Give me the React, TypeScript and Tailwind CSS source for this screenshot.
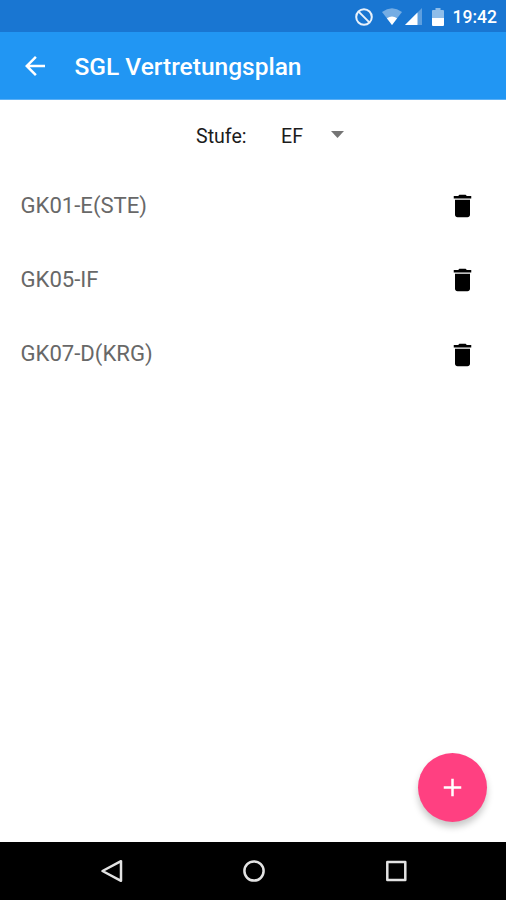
import { FC, useState } from "react";

const StatusBar: FC = () => (
    <div className="flex h-8 shrink-0 items-center justify-end bg-[#1976d2] pt-px pr-[9px] text-white">
        <svg className="mr-[9px] h-[18px] w-[18px]" viewBox="0 0 18 18" fill="none">
            <circle cx="9" cy="9" r="7.8" stroke="#e8f1fb" strokeWidth="2" />
            <path d="M3.6 3.6l10.8 10.8" stroke="#e8f1fb" strokeWidth="2" />
        </svg>
        <svg className="mr-[3px] h-[18px] w-[20px]" viewBox="0 0 20 18">
            <path d="M0 4Q10-3.4 20 4L10 17z" fill="#75ade4" />
            <path d="M4.9 10.3Q10 6.6 15.1 10.3L10 17z" fill="#fff" />
        </svg>
        <svg className="mr-[10px] h-[18px] w-[17px]" viewBox="0 0 17 18">
            <path d="M17 0v17H0z" fill="#5e9fdf" />
            <path d="M12.5 4.5V17H0z" fill="#fff" />
        </svg>
        <svg className="mr-[9px] h-[18px] w-[12px]" viewBox="0 0 12 18">
            <path d="M3.5 0h5v2H11q1 0 1 1v7H0V3q0-1 1-1h2.500z" fill="#8fbde9" />
            <path d="M0 10h12v7q0 1-1 1H1q-1 0-1-1z" fill="#fff" />
        </svg>
        <span className="text-[17.5px] leading-8 font-medium">19:42</span>
    </div>
);

const Toolbar: FC = () => (
    <header className="flex h-[68px] shrink-0 items-center border-b border-[#5cb0f5] bg-[#2196f3] pl-5 text-white">
        <button aria-label="Back">
            <svg className="h-[30px] w-[30px]" viewBox="0 0 24 24" fill="currentColor">
                <path d="M20 11H7.830l5.590-5.590L12 4l-8 8 8 8 1.410-1.410L7.830 13H20v-2z" />
            </svg>
        </button>
        <h1 className="ml-[24.5px] pt-[2px] text-[24.5px] leading-8 font-medium">SGL Vertretungsplan</h1>
    </header>
);

const Course: FC<{ name: string; onDelete: () => void }> = ({ name, onDelete }) => (
    <li className="flex h-[74.3px] items-center justify-between pr-[28.5px] pl-[20.5px]">
        <span className="text-[22.1px] text-[#686868]">{name}</span>
        <button aria-label="Delete" className="pt-[2px]" onClick={onDelete}>
            <svg className="h-[30px] w-[30px]" viewBox="0.4 0 24 24">
                <path d="M6 19c0 1.100.9 2 2 2h8c1.100 0 2-.9 2-2V7H6v12zM19 4h-3.500l-1-1h-5l-1 1H5v2h14V4z" />
            </svg>
        </button>
    </li>
);

const NavBar: FC = () => (
    <nav className="flex h-[58px] shrink-0 items-center justify-center gap-[118px] bg-black pl-px">
        <svg className="h-6 w-6" viewBox="0.500 0 24 24" fill="none" stroke="#e3e3e3" strokeWidth="2.5" strokeLinejoin="round">
            <path d="M21.500 2.200v19.600L3 12z" />
        </svg>
        <svg className="h-6 w-6" viewBox="0 0 24 24" fill="none" stroke="#e3e3e3" strokeWidth="2.5">
            <circle cx="12" cy="12" r="9.600" />
        </svg>
        <svg className="h-6 w-6" viewBox="0 0 24 24" fill="none" stroke="#e3e3e3" strokeWidth="2.5" strokeLinejoin="round">
            <path d="M3.300 3h18v18h-18z" />
        </svg>
    </nav>
);

export default function App() {
    const [courses, setCourses] = useState(["GK01-E(STE)", "GK05-IF", "GK07-D(KRG)"]);

    return (
        <div className="flex h-[900px] w-[506px] flex-col overflow-hidden bg-white font-['Roboto',sans-serif]">
            <StatusBar />
            <Toolbar />
            <main className="relative flex-1">
                <div className="flex h-[68px] items-center pt-[5px] pl-[196px] text-[19.6px] text-[#1c1c1c]">
                    <span className="w-[85px]">Stufe:</span>
                    <span className="w-[50px]">EF</span>
                    <svg className="mb-[5px] h-[7px] w-[13px]" viewBox="0 0 13 7">
                        <path d="M0 0h13L6.500 7z" fill="#757575" />
                    </svg>
                </div>
                <ul>
                    {courses.map((name) => (
                        <Course
                            key={name}
                            name={name}
                            onDelete={() => setCourses(courses.filter((c) => c !== name))}
                        />
                    ))}
                </ul>
                <button
                    aria-label="Add"
                    className="absolute right-[19px] bottom-5 flex h-[69px] w-[69px] items-center justify-center rounded-full bg-[#ff4081] text-white shadow-[0_5px_7px_rgba(0,0,0,0.22)]"
                >
                    <svg className="h-[30px] w-[30px]" viewBox="0.400 0.400 24 24" fill="currentColor">
                        <path d="M19 13h-6v6h-2v-6H5v-2h6V5h2v6h6v2z" />
                    </svg>
                </button>
            </main>
            <NavBar />
        </div>
    );
}
